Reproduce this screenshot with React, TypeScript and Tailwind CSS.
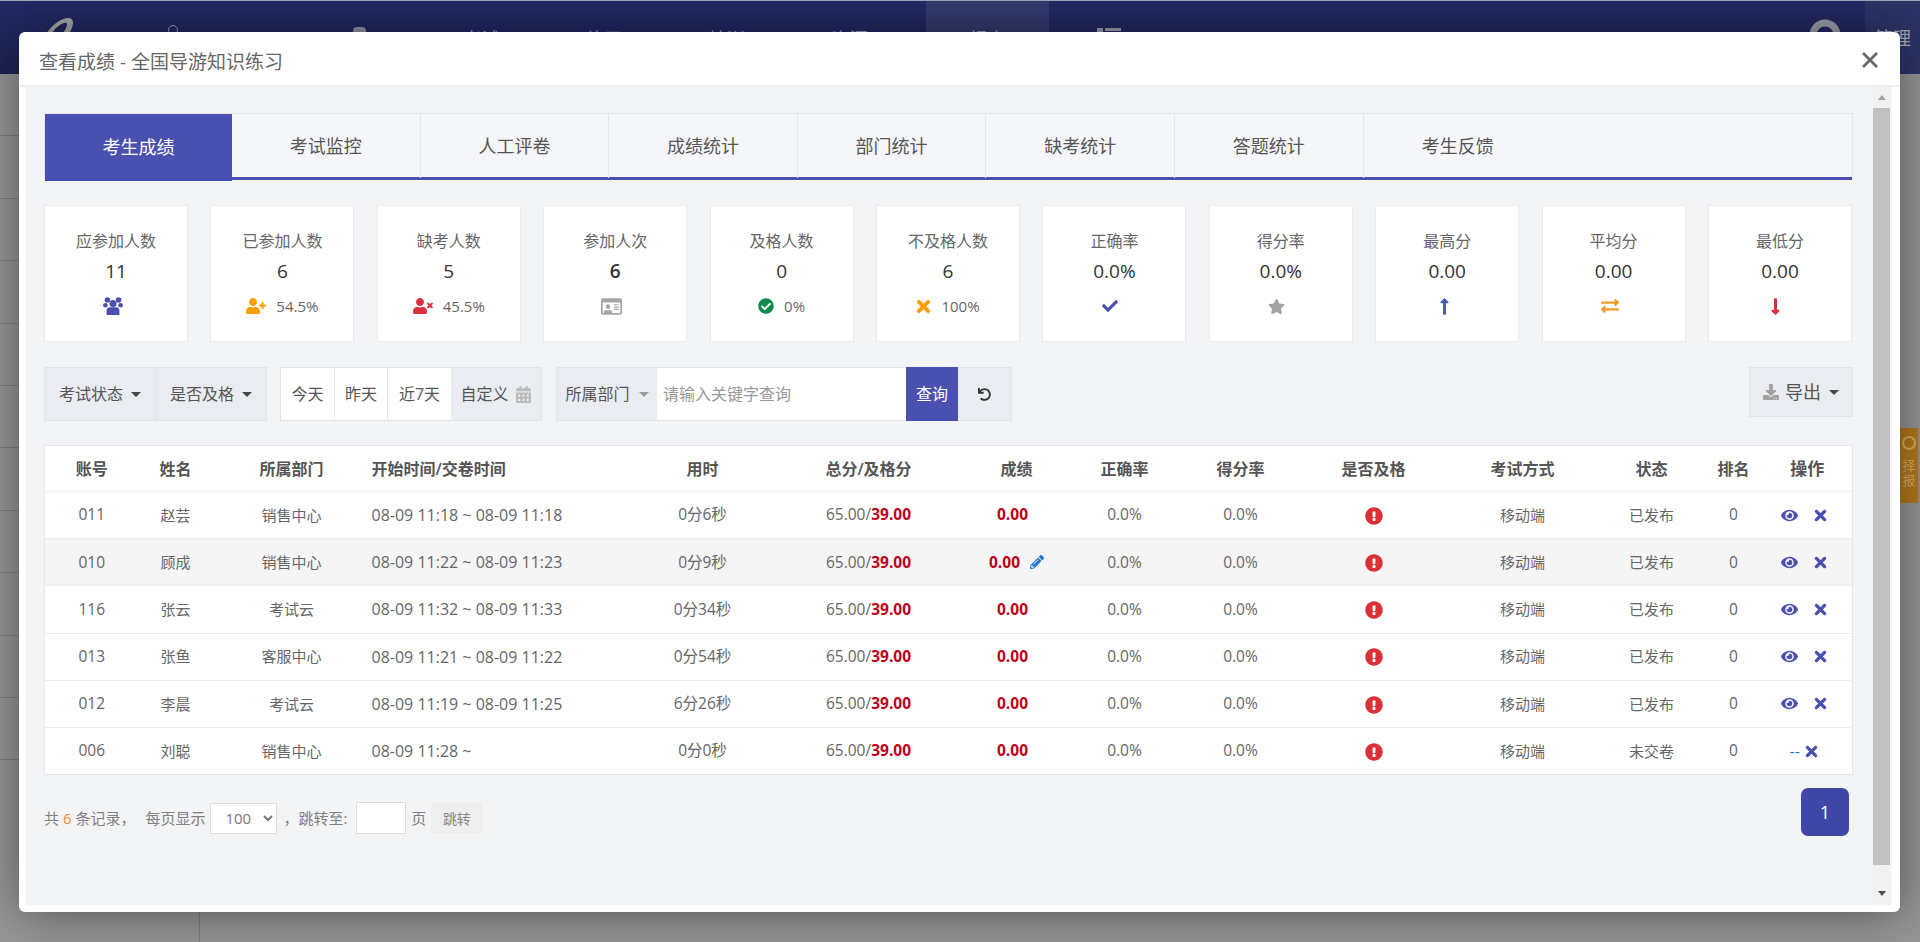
import React from "react";
import {
  FaUserPlus, FaUserTimes, FaRegIdCard, FaCheckCircle, FaCheck, FaStar,
  FaLongArrowAltUp, FaLongArrowAltDown, FaExchangeAlt, FaCalendarAlt, FaUndo, FaDownload,
  FaEye, FaExclamationCircle, FaPencilAlt,
} from "react-icons/fa";

const FONT = "font-['Open_Sans','Noto_Sans_CJK_SC',sans-serif]";

const Caret = ({ className = "" }: { className?: string }) => (
  <span className={`inline-block w-0 h-0 border-x-[5px] border-t-[5px] border-x-transparent ${className}`} />
);

const ThickX = ({ size = 14, className = "" }: { size?: number; className?: string }) => (
  <svg width={size} height={size} viewBox="0 0 14 14" className={className}>
    <path d="M2.6 2.6l8.8 8.8M11.4 2.6l-8.8 8.8" stroke="currentColor" strokeWidth="3.6" strokeLinecap="round" fill="none" />
  </svg>
);

const UsersIcon = () => (
  <svg width="20" height="18" viewBox="0 0 20 18" className="text-[#4a50b0] mr-[7px]" fill="currentColor">
    <circle cx="4.4" cy="3" r="2.8" />
    <circle cx="15.6" cy="3" r="2.8" />
    <circle cx="2.4" cy="8.2" r="2.3" />
    <circle cx="17.6" cy="8.2" r="2.3" />
    <circle cx="10" cy="6.6" r="3.5" />
    <path d="M3.6 18v-4.6c0-2 1.4-3.2 3.4-3.2h6c2 0 3.4 1.2 3.4 3.2V18z" />
  </svg>
);

const tabs = ["考生成绩", "考试监控", "人工评卷", "成绩统计", "部门统计", "缺考统计", "答题统计", "考生反馈"];

type Stat = { label: string; value: string; icon: React.ReactNode; pct?: string; bold?: boolean };
const stats: Stat[] = [
  { label: "应参加人数", value: "11", icon: <UsersIcon /> },
  { label: "已参加人数", value: "6", icon: <FaUserPlus className="text-[#ff9c0a] text-[20px]" />, pct: "54.5%" },
  { label: "缺考人数", value: "5", icon: <FaUserTimes className="text-[#d9303e] text-[20px]" />, pct: "45.5%" },
  { label: "参加人次", value: "6", bold: true, icon: <FaRegIdCard className="text-[#a6a6a6] text-[21px] mr-[7px]" /> },
  { label: "及格人数", value: "0", icon: <FaCheckCircle className="text-[#138a4c] text-[16px]" />, pct: "0%" },
  { label: "不及格人数", value: "6", icon: <ThickX size={15} className="text-[#ff9c0a]" />, pct: "100%" },
  { label: "正确率", value: "0.0%", icon: <FaCheck className="text-[#4a50b0] text-[16px] mr-2" /> },
  { label: "得分率", value: "0.0%", icon: <FaStar className="text-[#a3a3a3] text-[17px] mr-2" /> },
  { label: "最高分", value: "0.00", icon: <FaLongArrowAltUp className="text-[#4a5fb5] text-[19px] mr-[5px]" /> },
  { label: "平均分", value: "0.00", icon: <FaExchangeAlt className="text-[#f59a23] text-[18px] mr-2" /> },
  { label: "最低分", value: "0.00", icon: <FaLongArrowAltDown className="text-[#d9303e] text-[19px] mr-2" /> },
];

const headers = ["账号", "姓名", "所属部门", "开始时间/交卷时间", "用时", "总分/及格分", "成绩", "正确率", "得分率", "是否及格", "考试方式", "状态", "排名", "操作"];

const rows = [
  ["011", "赵芸", "销售中心", "08-09 11:18 ~ 08-09 11:18", "0分6秒", "已发布"],
  ["010", "顾成", "销售中心", "08-09 11:22 ~ 08-09 11:23", "0分9秒", "已发布"],
  ["116", "张云", "考试云", "08-09 11:32 ~ 08-09 11:33", "0分34秒", "已发布"],
  ["013", "张鱼", "客服中心", "08-09 11:21 ~ 08-09 11:22", "0分54秒", "已发布"],
  ["012", "李晨", "考试云", "08-09 11:19 ~ 08-09 11:25", "6分26秒", "已发布"],
  ["006", "刘聪", "销售中心", "08-09 11:28 ~", "0分0秒", "未交卷"],
];

const bgRows = Array.from({ length: 11 }, (_, i) => i);

export default function App() {
  return (
    <div className={`relative w-[1920px] h-[942px] overflow-hidden bg-[#969696] ${FONT}`}>
      {/* dimmed page behind the dialog */}
      <div className="h-px bg-[#a4a8bc]" />
      <div className="flex h-[73px] bg-gradient-to-b from-[#232a66] to-[#1d2455] text-[#9a9cb0] text-[18px]">
        <div className="w-[298px] pl-[38px] pt-[16px] flex items-start gap-[90px]">
          <svg width="40" height="30" viewBox="0 0 40 30">
            <path d="M2 30C6 16 18 2 30 1c6 0 6 6 3 12l-6 10-5-1 6-11c2-4 1-6-2-5C18 8 10 20 8 30z" fill="#a7a8a8" />
          </svg>
          <span className="w-[10px] h-[10px] mt-[8px] rounded-full border border-[#9a9cb0]" />
        </div>
        <div className="w-[122px] flex justify-center pt-[26px]">
          <span className="w-[13px] h-[10px] bg-[#8f91a6] rounded-t-[4px]" />
        </div>
        {["考试", "练习", "培训", "资源"].map((t) => (
          <div key={t} className="w-[122.75px] flex justify-center pt-[25px]">{t}</div>
        ))}
        <div className="w-[123px] ml-[15px] flex justify-center pt-[25px] bg-[#333a70]">报表</div>
        <div className="w-[120px] flex justify-center pt-[27px]">
          <svg width="24" height="8" viewBox="0 0 24 8" fill="#9a9cb0">
            <rect x="0" y="0" width="6" height="8" />
            <rect x="8" y="0" width="16" height="3" />
            <rect x="8" y="6" width="16" height="2" />
          </svg>
        </div>
        <div className="ml-auto flex">
          <svg width="34" height="40" viewBox="0 0 34 40" className="mt-[17px] mr-[23px]">
            <circle cx="17" cy="17" r="12" fill="none" stroke="#9d9dab" strokeWidth="7" />
          </svg>
          <div className="w-[55px] bg-[#2d3469] pl-[10px] pt-[24px] text-[#a9abba] text-[18px]">管理</div>
        </div>
      </div>
      <div className="flex h-[868px]">
        <div className="w-[200px] border-r border-[#7f7f7f]">
          {bgRows.map((i) => (
            <div key={i} className="h-[62.4px] border-b border-[#7e7e7e]" />
          ))}
        </div>
        <div className="flex-1 flex justify-end pt-[354px]">
          <div className="w-[18px] mr-[2px] h-[75px] bg-[#b57a1c] text-[#d8b06a] text-[13px] leading-[15px] flex flex-col items-center pt-[8px]">
            <span className="w-[14px] h-[14px] rounded-full border-2 border-[#d8b06a] shrink-0" />
            <span className="mt-[8px]">择</span>
            <span>报</span>
          </div>
        </div>
      </div>

      {/* dialog */}
      <div className="absolute left-[19px] top-[32px] w-[1881px] h-[880px] bg-white rounded-[6px] shadow-[1px_1px_50px_rgba(0,0,0,0.45)] flex flex-col">
        <div className="h-[55px] shrink-0 flex items-center justify-between pl-[20px] pr-[21px] border-b-2 border-[#eeeff1]">
          <span className="text-[19px] text-[#666] mt-[7px]">查看成绩 - 全国导游知识练习</span>
          <svg width="18" height="18" viewBox="0 0 18 18" className="mt-[2px]">
            <path d="M2 2l14 14M16 2L2 16" stroke="#666" strokeWidth="2.7" />
          </svg>
        </div>
        <div className="flex-1 flex bg-[#f3f4f6] ml-[7px] mr-[8px] mb-[7px] min-h-0">
          <div className="flex-1 pl-[18px] pr-[20px] pt-[26px] min-w-0">
            {/* tabs */}
            <div className="flex h-[67px] border border-b-0 border-[#e4e6ec] bg-[#f5f6fa] shadow-[inset_0_-3px_0_#4a50b0]">
              {tabs.map((t, i) => (
                <div
                  key={t}
                  className={`flex items-center justify-center text-[18px] ${
                    i === 0 ? "w-[187px] bg-[#4a50b0] text-white h-[67px]" : "w-[188.6px] text-[#555] h-[64px]"
                  } ${i > 0 && i < 7 ? "border-r border-[#e4e6ec]" : ""}`}
                >
                  {t}
                </div>
              ))}
            </div>

            {/* stat cards */}
            <div className="grid grid-cols-11 gap-[22.4px] mt-[25px] mr-[1px]">
              {stats.map((s) => (
                <div key={s.label} className="h-[137px] bg-white border border-[#e9ebef] flex flex-col items-center pt-[23px]">
                  <div className="text-[16px] leading-[24px] text-[#666]">{s.label}</div>
                  <div className={`text-[19px] leading-[26px] mt-[5px] text-[#333] ${s.bold ? "font-semibold" : ""}`}>{s.value}</div>
                  <div className="flex items-center h-[24px] mt-[10px] gap-[10px]">
                    {s.icon}
                    {s.pct && <span className="text-[15px] text-[#666]">{s.pct}</span>}
                  </div>
                </div>
              ))}
            </div>

            {/* toolbar */}
            <div className="flex mt-[25px] items-start">
              <div className="flex h-[54px] border border-[#e2e4ea] bg-[#e9ecf0] text-[16px] text-[#555]">
                <button className="w-[111px] flex items-center justify-center gap-[8px] border-r border-[#e2e4ea]">
                  考试状态 <Caret className="border-t-[#444]" />
                </button>
                <button className="w-[110px] flex items-center justify-center gap-[8px]">
                  是否及格 <Caret className="border-t-[#444]" />
                </button>
              </div>
              <div className="flex h-[54px] ml-[13px] border border-[#e2e4ea] bg-white text-[16px] text-[#555]">
                <button className="w-[54px] border-r border-[#e2e4ea]">今天</button>
                <button className="w-[53px] border-r border-[#e2e4ea]">昨天</button>
                <button className="w-[63px]">近7天</button>
                <button className="w-[90px] bg-[#e9ecf0] flex items-center justify-center gap-[6px]">
                  自定义 <FaCalendarAlt className="text-[#bbb] text-[17px]" />
                </button>
              </div>
              <div className="flex h-[54px] ml-[14px] border border-[#e2e4ea] text-[16px] text-[#555]">
                <button className="w-[100px] bg-[#e9ecf0] flex items-center justify-center gap-[9px]">
                  所属部门 <Caret className="border-t-[#999]" />
                </button>
                <input className="w-[249px] bg-white pl-[6px] outline-none placeholder:text-[#999]" placeholder="请输入关键字查询" />
                <button className="w-[52px] bg-[#4a50b0] text-white -my-px">查询</button>
                <button className="w-[53px] bg-[#e9ecf0] flex items-center justify-center"><FaUndo className="text-[#333] text-[13px]" /></button>
              </div>
              <button className="ml-auto w-[104px] h-[50px] border border-[#e2e4ea] bg-[#e9ecf0] text-[18px] text-[#555] flex items-center justify-center gap-[6px]">
                <FaDownload className="text-[#a3a3a3] text-[16px]" /> 导出 <Caret className="border-t-[#444] ml-[2px]" />
              </button>
            </div>

            {/* table */}
            <table className="w-full table-fixed mt-[24px] bg-white border border-[#e5e7ec] border-collapse text-[15px] text-[#666]">
              <colgroup>
                <col className="w-[94px]" />
                <col className="w-[74px]" />
                <col className="w-[158px]" />
                <col className="w-[250px]" />
                <col className="w-[164px]" />
                <col className="w-[168px]" />
                <col className="w-[128px]" />
                <col className="w-[88px]" />
                <col className="w-[144px]" />
                <col className="w-[122px]" />
                <col className="w-[176px]" />
                <col className="w-[82px]" />
                <col className="w-[82px]" />
                <col />
              </colgroup>
              <thead>
                <tr className="h-[46px]">
                  {headers.map((h, i) => (
                    <th key={h} className={`text-[16px] font-semibold text-[#555] ${i === 3 ? "text-left pl-[1px] text-[16.5px]" : "text-center"} ${i === 13 ? "pr-[12px] text-[17px]" : ""}`}>
                      {h}
                    </th>
                  ))}
                </tr>
              </thead>
              <tbody>
                {rows.map((r, i) => (
                  <tr key={r[0]} className={`h-[47.2px] border-t border-[#ebedf0] ${i === 1 ? "bg-[#f5f5f5]" : ""}`}>
                    <td className="text-center text-[15.5px]">{r[0]}</td>
                    <td className="text-center">{r[1]}</td>
                    <td className="text-center">{r[2]}</td>
                    <td className="pl-[1px] text-[16px]">{r[3]}</td>
                    <td className="text-center text-[15.5px]">{r[4]}</td>
                    <td className="text-center text-[15.5px]">65.00/<b className="text-[#c00018] font-bold">39.00</b></td>
                    <td className="text-center pr-[8px] text-[15.5px]">
                      <span className={`inline-flex items-center gap-[10px] font-bold text-[#c00018] ${i === 1 ? "ml-[8px]" : ""}`}>
                        0.00
                        {i === 1 && <FaPencilAlt className="text-[#1f78d1] text-[14px]" />}
                      </span>
                    </td>
                    <td className="text-center text-[15.5px]">0.0%</td>
                    <td className="text-center text-[15.5px]">0.0%</td>
                    <td className="text-center"><FaExclamationCircle className="inline text-[#dc3038] text-[18px] -mt-[2px]" /></td>
                    <td className="text-center">移动端</td>
                    <td className="text-center">{r[5]}</td>
                    <td className="text-center text-[15.5px]">0</td>
                    <td>
                      {i < 5 ? (
                        <div className="flex items-center pl-[6px] gap-[16px]">
                          <FaEye className="text-[#4a50b0] text-[17px]" />
                          <ThickX size={13} className="text-[#4a50b0]" />
                        </div>
                      ) : (
                        <div className="flex items-center pl-[15px] gap-[5px]">
                          <span className="text-[#1f78d1] text-[16px]">--</span>
                          <ThickX size={13} className="text-[#4a50b0]" />
                        </div>
                      )}
                    </td>
                  </tr>
                ))}
              </tbody>
            </table>

            {/* footer */}
            <div className="flex items-start justify-between mt-[13px] pr-[4px]">
              <div className="flex items-center text-[15px] text-[#808080] pt-[14px] h-[46px]">
                <span>共 <span className="text-[#f08a30]">6</span> 条记录，</span>
                <span className="ml-[10px]">每页显示</span>
                <select className="w-[67px] h-[31px] ml-[5px] bg-white border border-[#ddd] text-[15px] text-[#777] pl-[10px]">
                  <option>100</option>
                </select>
                <span className="ml-[6px]">，跳转至:</span>
                <input className="w-[50px] h-[32px] ml-[9px] bg-white border border-[#ddd]" />
                <span className="ml-[5px]">页</span>
                <button className="w-[51px] h-[30px] ml-[5px] bg-[#eeeeee] text-[14px] text-[#888] rounded-[2px]">跳转</button>
              </div>
              <button className="w-[48px] h-[48px] bg-[#3f47a8] text-white text-[18px] rounded-[7px]">1</button>
            </div>
          </div>

          {/* scrollbar */}
          <div className="w-[17px] mr-[2px] flex flex-col shrink-0 bg-[#f1f1f1]">
            <div className="h-[21px] flex items-center justify-center">
              <span className="w-0 h-0 border-x-[4px] border-b-[5px] border-x-transparent border-b-[#a3a3a3]" />
            </div>
            <div className="h-[757px] bg-[#c1c1c1]" />
            <div className="flex-1 flex items-start justify-center pt-[26px]">
              <span className="w-0 h-0 border-x-[4px] border-t-[5px] border-x-transparent border-t-[#505050]" />
            </div>
          </div>
        </div>
      </div>
    </div>
  );
}
